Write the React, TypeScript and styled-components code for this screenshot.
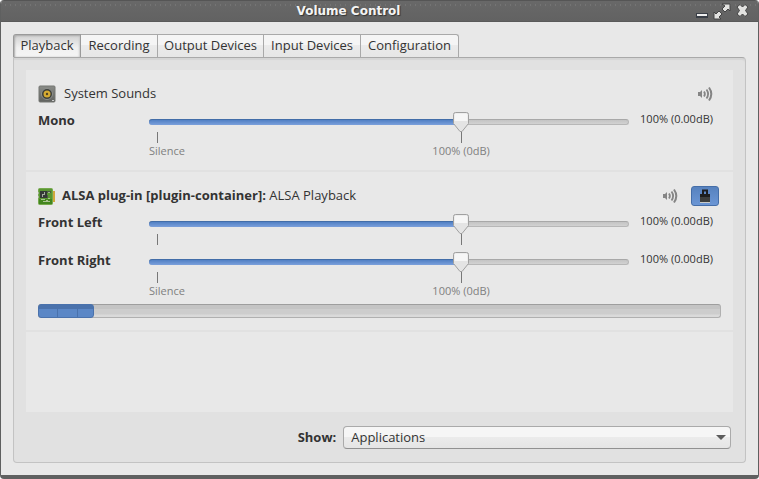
import React, { useId, useState } from "react";
import styled, { createGlobalStyle } from "styled-components";

const GlobalStyle = createGlobalStyle`
  * { box-sizing: border-box; }
  body {
    margin: 0;
    background: #fff;
    color: #333;
    font: 13px/18px "Open Sans", "Noto Sans", sans-serif;
  }
  button, select { font: inherit; color: inherit; }
`;

const Window = styled.main`
  display: flex;
  flex-direction: column;
  min-height: 100vh;
  border: solid #5f6060;
  border-width: 0 1px 4px;
  border-radius: 4px;
  background: #e8e8e8;
  overflow: hidden;
`;

const TitleBar = styled.header`
  display: flex;
  align-items: center;
  height: 22px;
  padding: 0 9px 0 0;
  border-top: 1px solid #555;
  border-bottom: 1px solid #5a5a5a;
  background:
    radial-gradient(circle, #747474 0 1px, transparent 1px) 2px 2px / 5px 4px repeat-x,
    linear-gradient(#686868, #626262);
`;

const Title = styled.h1`
  flex: 1;
  margin: 0;
  color: #f4f4f4;
  font: bold 12px/20px "DejaVu Sans", sans-serif;
  text-align: center;
  text-shadow: 1px 1px 1px #333;
`;

const WindowButtons = styled.div`
  display: flex;
  gap: 5px;
`;

const WindowButton = styled.button`
  display: flex;
  padding: 0;
  border: 0;
  background: none;
`;

const Content = styled.div`
  display: flex;
  flex: 1;
  flex-direction: column;
  padding: 12px;
`;

const TabList = styled.div`
  display: flex;
  height: 23px;
`;

const Tab = styled.button<{ $width: number }>`
  flex: 0 0 ${(p) => p.$width}px;
  padding: 0 0 2px;
  border: solid #a9a9a9;
  border-width: 1px 1px 0 0;
  background: linear-gradient(#f5f5f5 0 45%, #ebebeb 46%, #e6e6e6);
  white-space: nowrap;
  line-height: 20px;
  &:first-child { border-left-width: 1px; border-top-left-radius: 3px; }
  &:last-child { border-top-right-radius: 3px; }
  &[aria-selected="true"] {
    border-color: #9a9a9a;
    background: linear-gradient(#d2d2d2, #dddddd 5px, #f1f1f1 13px, #f5f5f5);
    box-shadow: inset 1px 1px 2px #aaa, inset -1px 0 2px #ccc;
  }
`;

const Panel = styled.section`
  display: flex;
  flex: 1;
  flex-direction: column;
  gap: 14px;
  padding: 12px 12px 13px;
  border: 1px solid #c3c3c3;
  border-top-color: #a9a9a9;
  border-radius: 0 4px 4px 4px;
  background: #e1e1e1;
  box-shadow: inset 0 2px 1px #d5d5d5;
`;

const StreamList = styled.div`
  flex: 1;
  background: #e8e8e8;
`;

const Stream = styled.article`
  padding: 10px 12px 12px;
  border-bottom: 2px solid #e1e1e1;
`;

const StreamHeader = styled.div`
  display: flex;
  align-items: center;
  gap: 7px;
  height: 28px;
  padding-right: 2px;
`;

const StreamName = styled.h2<{ $indent?: boolean }>`
  flex: 1;
  margin: 0;
  padding: 0 0 2px ${(p) => (p.$indent ? 1 : 0)}px;
  font: inherit;
  white-space: nowrap;
`;

const IconToggle = styled.button`
  display: flex;
  align-items: center;
  justify-content: center;
  width: 28px;
  height: 20px;
  padding: 0;
  border: 0;
  border-radius: 3px;
  background: none;
  &[aria-pressed="true"][data-filled] {
    border: 1px solid #456ea8;
    background: linear-gradient(#5782be, #6b96d5);
  }
`;

const ChannelRow = styled.div`
  display: grid;
  grid-template-columns: 111px 1fr 92px;
`;

const ChannelLabel = styled.label`
  padding-top: 3px;
  font-weight: bold;
`;

const Readout = styled.output`
  padding: 2px 8px 0 0;
  font-size: 11px;
  text-align: right;
  white-space: nowrap;
`;

const Scale = styled.div`
  position: relative;
`;

const Range = styled.input`
  display: block;
  width: 100%;
  height: 28px;
  margin: 0;
  appearance: none;
  background: none;
  &::-webkit-slider-thumb {
    appearance: none;
    width: 16px;
    height: 20px;
    opacity: 0;
  }
`;

const Track = styled.div`
  position: absolute;
  top: 11px;
  left: 0;
  width: 100%;
  height: 6px;
  border: 1px solid #b7b7b7;
  border-top-color: #a8a8a8;
  border-radius: 3px;
  background: linear-gradient(#c4c4c4, #d2d2d2);
  pointer-events: none;
`;

const Fill = styled.div`
  position: absolute;
  top: 11px;
  left: 0;
  height: 6px;
  border-top: 1px solid #426da8;
  border-radius: 3px 0 0 3px;
  background: linear-gradient(#5180c4, #7ba0dc);
  pointer-events: none;
`;

const Thumb = styled.svg`
  position: absolute;
  top: 4px;
  transform: translateX(-50%);
  pointer-events: none;
`;

const Ticks = styled.div`
  position: relative;
  height: 10px;
`;

const Tick = styled.span`
  position: absolute;
  top: -4px;
  width: 1px;
  height: 11px;
  background: #777;
`;

const Marks = styled.div`
  position: relative;
  height: 12px;
  color: #808080;
  font-size: 11px;
  line-height: 10px;
  white-space: nowrap;
`;

const Mark = styled.span`
  position: absolute;
  transform: translateX(-50%);
`;

const Meter = styled.div`
  height: 14px;
  margin-top: 6px;
  border: 1px solid #b0b0b0;
  border-top-color: #9e9e9e;
  border-radius: 3px;
  background: linear-gradient(#c4c4c4 0 4px, #cdcdcd 4px 9px, #dadada 10px);
`;

const MeterLevel = styled.div`
  height: 14px;
  margin: -1px;
  border: 1px solid #4a72ac;
  border-radius: 3px;
  background:
    repeating-linear-gradient(90deg, transparent 0 18px, #4a72ac 18px 19px, transparent 19px 20px),
    linear-gradient(#4a72ac 0 4px, #5b87c6 4px);
`;

const Footer = styled.div`
  display: grid;
  grid-template-columns: 4fr 5fr;
  align-items: center;
  gap: 7px;
  padding-right: 2px;
`;

const FooterLabel = styled.label`
  padding-bottom: 2px;
  font-weight: bold;
  text-align: right;
`;

const SelectBox = styled.div`
  position: relative;
`;

const Select = styled.select`
  display: block;
  width: 100%;
  height: 23px;
  padding: 0 24px 2px 7px;
  appearance: none;
  border: 1px solid #aaa;
  border-bottom-color: #919191;
  border-radius: 4px;
  background: linear-gradient(#f6f6f6 0 48%, #ebebeb 49%, #e5e5e5);
`;

const SelectArrow = styled.svg`
  position: absolute;
  top: 9px;
  right: 5px;
  pointer-events: none;
`;

const MAX_VOLUME = 152.6;

/* Distance from the left end of a track to the middle of its thumb. */
const along = (value: number) =>
  `calc(8px + (100% - 16px) * ${value / MAX_VOLUME})`;

function SpeakerDeviceIcon() {
  return (
    <svg width="18" height="18" viewBox="0 0 18 18" aria-hidden="true">
      <defs>
        <linearGradient id="case" x2="0" y2="1">
          <stop stopColor="#8a8c88" />
          <stop offset="1" stopColor="#5f615e" />
        </linearGradient>
      </defs>
      <rect x="1" y="1" width="16" height="16" rx="1" fill="url(#case)" stroke="#747673" />
      <circle cx="9" cy="9" r="5.5" fill="#444743" stroke="#8f918d" />
      <circle cx="9" cy="9" r="4.5" fill="#393b38" />
      <circle cx="9" cy="9" r="3.5" fill="#d6ab32" />
      <circle cx="9" cy="9" r="1.2" fill="#514323" />
      <path d="M14 15.5h2" stroke="#ccc" />
    </svg>
  );
}

function SoundCardIcon() {
  return (
    <svg width="17" height="18" viewBox="0 0 17 18" aria-hidden="true">
      <path d="M14 4h3v11h-3z" fill="#d2a83d" />
      <path d="M14 4h1v11h-1z" fill="#b6b8b0" />
      <rect x=".5" y="1.5" width="14" height="16" rx="1" fill="#5a9632" stroke="#75a94d" />
      <path d="M1 12h13v5H1z" fill="#42851e" />
      <path d="M2 4h7v7H2z" fill="#343936" />
      <path d="M9 4h4v2H9zM9 8h1v3H9z" fill="#4c5a44" />
      <path d="M6 5h1v3H5v2H4V7h2z" fill="#a3ab9f" />
      <path d="M10 5h2v1h-2z" fill="#9fb38f" />
      <path d="M3 12.5h4M5 14.5h7M8 13.5h2M10 11.5h2" stroke="#a9c292" />
      <path d="M0 5h1v2H0zM0 9h1v2H0z" fill="#a9b59e" />
    </svg>
  );
}

function SoundIcon() {
  return (
    <svg width="16" height="16" viewBox="0 0 16 16" aria-hidden="true" fill="none" stroke="#858585">
      <path d="M1 6h2l2-2v8l-2-2H1z" fill="#858585" stroke="none" />
      <path d="M7 5.5q1.8 2.5 0 5" strokeWidth="1.8" />
      <path d="M9.5 3.5q3.2 4.5 0 9" strokeWidth="1.8" />
      <path d="M12 1.5q4.6 6.5 0 13" strokeWidth="2" />
    </svg>
  );
}

function LockIcon() {
  return (
    <svg width="12" height="16" viewBox="0 0 12 16" aria-hidden="true">
      <path d="M4 7V2.5h4V7" fill="none" stroke="#1c1e20" strokeWidth="2" />
      <rect x="1" y="7" width="10" height="7" fill="#3d3f3e" />
      <path d="M1 6h10v3H1z" fill="#1d1f20" />
      <path d="M1 14.5h10" stroke="#c9cbc9" />
    </svg>
  );
}

interface ChannelProps {
  name: string;
  value: number;
  showMarks?: boolean;
  onChange: (value: number) => void;
}

function Channel({ name, value, showMarks, onChange }: ChannelProps) {
  const id = useId();
  const decibels = value > 0 ? (60 * Math.log10(value / 100)).toFixed(2) : "-∞";
  return (
    <ChannelRow>
      <ChannelLabel htmlFor={id}>{name}</ChannelLabel>
      <Scale>
        <Track />
        <Fill style={{ width: along(value) }} />
        <Range
          id={id}
          type="range"
          min={0}
          max={MAX_VOLUME}
          step={1}
          value={value}
          onChange={(e) => onChange(Number(e.target.value))}
        />
        <Ticks>
          <Tick style={{ left: along(0) }} />
          <Tick style={{ left: along(100) }} />
        </Ticks>
        {showMarks && (
          <Marks>
            <span>Silence</span>
            <Mark style={{ left: along(100) }}>100% (0dB)</Mark>
          </Marks>
        )}
        <Thumb width="16" height="20" viewBox="0 0 16 20" style={{ left: along(value) }}>
          <path d="M.5 2.5q0-2 2-2h11q2 0 2 2v9l-6.5 8h-2l-6.5-8z" fill="#e4e4e4" stroke="#a0a0a0" />
          <path d="M1.5 3q0-1.5 1.5-1.5h10q1.5 0 1.5 1.5v6h-13z" fill="#f6f6f6" />
        </Thumb>
      </Scale>
      <Readout htmlFor={id}>
        {value}% ({decibels}dB)
      </Readout>
    </ChannelRow>
  );
}

function MuteButton() {
  const [muted, setMuted] = useState(false);
  return (
    <IconToggle aria-label="Mute audio" aria-pressed={muted} onClick={() => setMuted(!muted)}>
      <SoundIcon />
    </IconToggle>
  );
}

const TABS = [
  { name: "Playback", width: 68 },
  { name: "Recording", width: 77 },
  { name: "Output Devices", width: 106 },
  { name: "Input Devices", width: 97 },
  { name: "Configuration", width: 98 },
];

export default function App() {
  const [tab, setTab] = useState("Playback");
  const [mono, setMono] = useState(100);
  const [front, setFront] = useState([100, 100]);
  const [locked, setLocked] = useState(true);

  const changeFront = (index: number, value: number) =>
    setFront(front.map((old, i) => (locked || i === index ? value : old)));

  return (
    <>
      <GlobalStyle />
      <Window>
        <TitleBar>
          <Title>Volume Control</Title>
          <WindowButtons>
            <WindowButton aria-label="Minimize">
              <svg width="12" height="18" viewBox="0 0 12 18">
                <path d="M0 11h12v5H0z" fill="#393e46" />
                <path d="M1 12h10v2H1z" fill="#eee" />
              </svg>
            </WindowButton>
            <WindowButton aria-label="Maximize">
              <svg width="18" height="18" viewBox="0 0 18 18">
                <path
                  d="M9 2h8v7l-2-2-3 3-3-3 3-3zM1 10l2 2 3-3 3 3-3 3 2 2H1z"
                  fill="#e2e2e0"
                  stroke="#444"
                />
              </svg>
            </WindowButton>
            <WindowButton aria-label="Close">
              <svg width="13" height="18" viewBox="0 0 13 18">
                <path
                  d="M1 5l3-2.500 2.500 2.500 2.500-2.500 3 2.500-2.500 3.500 2.500 3.500-3 2.500-2.500-2.500-2.500 2.500-3-2.500 2.500-3.500z"
                  fill="#e2e2e0"
                  stroke="#444"
                />
              </svg>
            </WindowButton>
          </WindowButtons>
        </TitleBar>

        <Content>
          <TabList role="tablist">
            {TABS.map(({ name, width }) => (
              <Tab
                key={name}
                role="tab"
                aria-selected={tab === name}
                $width={width}
                onClick={() => setTab(name)}
              >
                {name}
              </Tab>
            ))}
          </TabList>

          <Panel role="tabpanel" aria-label={tab}>
            <StreamList>
              <Stream>
                <StreamHeader>
                  <SpeakerDeviceIcon />
                  <StreamName $indent>System Sounds</StreamName>
                  <MuteButton />
                </StreamHeader>
                <Channel name="Mono" value={mono} onChange={setMono} showMarks />
              </Stream>

              <Stream>
                <StreamHeader>
                  <SoundCardIcon />
                  <StreamName>
                    <b>ALSA plug-in [plugin-container]:</b> ALSA Playback
                  </StreamName>
                  <MuteButton />
                  <IconToggle
                    data-filled
                    aria-label="Lock channels together"
                    aria-pressed={locked}
                    onClick={() => setLocked(!locked)}
                  >
                    <LockIcon />
                  </IconToggle>
                </StreamHeader>
                <Channel name="Front Left" value={front[0]} onChange={(v) => changeFront(0, v)} />
                <Channel
                  name="Front Right"
                  value={front[1]}
                  onChange={(v) => changeFront(1, v)}
                  showMarks
                />
                <Meter role="meter" aria-label="Level" aria-valuenow={8} aria-valuemin={0} aria-valuemax={100}>
                  <MeterLevel style={{ width: "8.2%" }} />
                </Meter>
              </Stream>
            </StreamList>

            <Footer>
              <FooterLabel htmlFor="show">Show:</FooterLabel>
              <SelectBox>
                <Select id="show" defaultValue="Applications">
                  <option>All Streams</option>
                  <option>Applications</option>
                  <option>Virtual Streams</option>
                </Select>
                <SelectArrow width="10" height="6" viewBox="0 0 10 6" aria-hidden="true">
                  <path d="M0 0h10L5 5z" fill="#5c5c5c" />
                </SelectArrow>
              </SelectBox>
            </Footer>
          </Panel>
        </Content>
      </Window>
    </>
  );
}
